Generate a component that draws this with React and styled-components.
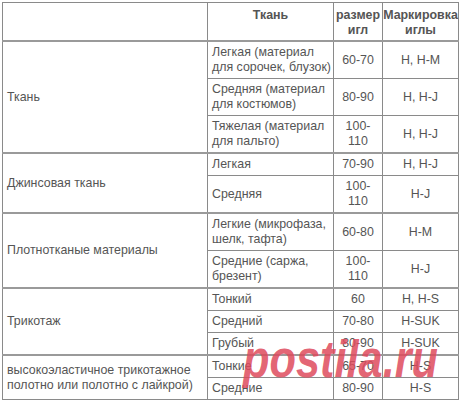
import React from "react";
import styled, { createGlobalStyle } from "styled-components";

const Global = createGlobalStyle`
  html, body { margin: 0; padding: 0; background: #fff; }
  body { font-family: "Liberation Sans", Arial, sans-serif; }
`;

const Wrap = styled.div`
  position: relative;
  width: 460px;
  height: 404px;
  padding: 2px 0 0 2px;
  box-sizing: border-box;
  overflow: hidden;
`;

const Table = styled.table`
  border-collapse: collapse;
  table-layout: fixed;
  width: 456px;
  font-size: 12.4px;
  line-height: 15px;
  color: #555;
`;

const Th = styled.th`
  border: 1px solid #8a8a8a;
  font-weight: bold;
  text-align: center;
  vertical-align: top;
  padding: 5px 0 2px;
  height: 30px;
  color: #555;
  white-space: nowrap;
`;

const Group = styled.td`
  border: 1px solid #8a8a8a;
  border-top: 2px solid #9a9a9a;
  padding: 0 4px;
  vertical-align: middle;
  white-space: nowrap;
`;

const Cell = styled.td`
  border: 1px solid #8a8a8a;
  border-top: ${(p) => (p.$first ? "2px solid #9a9a9a" : "1px solid #8a8a8a")};
  padding: 3px ${(p) => (p.$center ? "0" : "4px")};
  text-align: ${(p) => (p.$center ? "center" : "left")};
  vertical-align: middle;
  height: ${(p) => (p.$tall ? "30px" : "15px")};
  white-space: nowrap;
`;

const Watermark = styled.div`
  position: absolute;
  left: 243px;
  top: 334px;
  font-family: "Liberation Sans", Arial, sans-serif;
  font-weight: bold;
  font-style: italic;
  font-size: 51px;
  line-height: 1;
  color: rgba(222, 74, 92, 0.85);
  transform: scaleX(0.85);
  transform-origin: left top;
  white-space: nowrap;
  pointer-events: none;
`;

const data = [
  {
    group: "Ткань",
    rows: [
      { t: ["Легкая (материал", "для сорочек, блузок)"], s: ["60-70"], m: "H, H-M" },
      { t: ["Средняя (материал", "для костюмов)"], s: ["80-90"], m: "H, H-J" },
      { t: ["Тяжелая (материал", "для пальто)"], s: ["100-", "110"], m: "H, H-J" },
    ],
  },
  {
    group: "Джинсовая ткань",
    rows: [
      { t: ["Легкая"], s: ["70-90"], m: "H, H-J" },
      { t: ["Средняя"], s: ["100-", "110"], m: "H-J", tall: true },
    ],
  },
  {
    group: "Плотнотканые материалы",
    rows: [
      { t: ["Легкие (микрофаза,", "шелк, тафта)"], s: ["60-80"], m: "H-M" },
      { t: ["Средние (саржа,", "брезент)"], s: ["100-", "110"], m: "H-J" },
    ],
  },
  {
    group: "Трикотаж",
    rows: [
      { t: ["Тонкий"], s: ["60"], m: "H, H-S" },
      { t: ["Средний"], s: ["70-80"], m: "H-SUK" },
      { t: ["Грубый"], s: ["80-90"], m: "H-SUK" },
    ],
  },
  {
    group: ["высокоэластичное трикотажное", "полотно или полотно с лайкрой)"],
    rows: [
      { t: ["Тонкие"], s: ["65-70"], m: "H-S" },
      { t: ["Средние"], s: ["80-90"], m: "H-S" },
    ],
  },
];

const Lines = ({ items }) =>
  items.map((l, i) => (
    <React.Fragment key={i}>
      {i > 0 && <br />}
      {l}
    </React.Fragment>
  ));

export default function App() {
  return (
    <>
      <Global />
      <Wrap>
        <Table>
          <colgroup>
            <col style={{ width: 205 }} />
            <col style={{ width: 126 }} />
            <col style={{ width: 49 }} />
            <col style={{ width: 76 }} />
          </colgroup>
          <thead>
            <tr>
              <Th />
              <Th>Ткань</Th>
              <Th>
                размер
                <br />
                игл
              </Th>
              <Th>
                Маркировка
                <br />
                иглы
              </Th>
            </tr>
          </thead>
          <tbody>
            {data.map((g, gi) =>
              g.rows.map((r, ri) => {
                const tall = r.tall || r.t.length > 1 || r.s.length > 1;
                return (
                  <tr key={`${gi}-${ri}`}>
                    {ri === 0 && (
                      <Group rowSpan={g.rows.length}>
                        <Lines items={Array.isArray(g.group) ? g.group : [g.group]} />
                      </Group>
                    )}
                    <Cell $first={ri === 0} $tall={tall}>
                      <Lines items={r.t} />
                    </Cell>
                    <Cell $first={ri === 0} $tall={tall} $center>
                      <Lines items={r.s} />
                    </Cell>
                    <Cell $first={ri === 0} $tall={tall} $center>
                      {r.m}
                    </Cell>
                  </tr>
                );
              })
            )}
          </tbody>
        </Table>
        <Watermark>postila.ru</Watermark>
      </Wrap>
    </>
  );
}
